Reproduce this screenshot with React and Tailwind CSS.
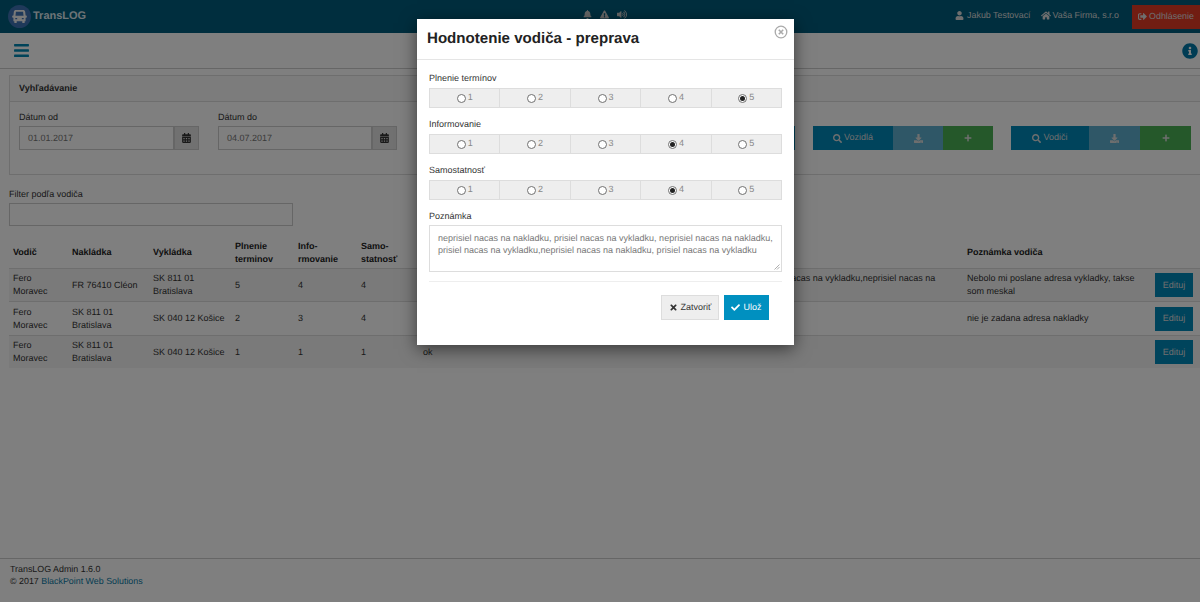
import React from "react";
import {
  FaBell, FaExclamationTriangle, FaVolumeUp, FaUser, FaHome, FaSignOutAlt, FaBars, FaInfoCircle,
  FaCalendarAlt, FaSearch, FaDownload, FaPlus, FaTimes, FaCheck,
} from "react-icons/fa";

const FONT = "font-['Liberation_Sans',Arial,sans-serif]";

function Radio({ n, checked }) {
  return (
    <div className="flex-1 flex items-center justify-center gap-[2px] bg-[#eeeeee] border border-[#dddddd] -ml-px first:ml-0 text-[#888888] text-[9px]">
      <span className="w-[9px] h-[9px] rounded-full border border-[#707070] bg-white flex items-center justify-center">
        {checked && <span className="w-[5px] h-[5px] rounded-full bg-[#222222]" />}
      </span>
      <span>{n}</span>
    </div>
  );
}

function RadioGroup({ label, value, labelClass }) {
  return (
    <div className={labelClass}>
      <div className="text-[9px] leading-[12px] text-[#333333] mb-[4px]">{label}</div>
      <div className="flex h-[20px]">
        {[1, 2, 3, 4, 5].map((n) => (
          <Radio key={n} n={n} checked={n === value} />
        ))}
      </div>
    </div>
  );
}

function DateField({ label, value, widthClass }) {
  return (
    <div>
      <div className="text-[9px] leading-[12px] text-[#333333] mb-[3px]">{label}</div>
      <div className="flex h-[24px]">
        <div className={`${widthClass} border border-[#cccccc] bg-white px-[8px] pt-[1px] flex items-center text-[9px] text-[#777777]`}>{value}</div>
        <div className="w-[25px] bg-[#e2e2e2] border border-[#cccccc] flex items-center justify-center text-[#333333]">
          <FaCalendarAlt className="w-[9px] h-[10px]" />
        </div>
      </div>
    </div>
  );
}

function ActionGroup({ label, w1, w2, w3 }) {
  return (
    <div className="flex h-[24px] text-[9px] text-[#dddddd]">
      <div className={`${w1} bg-[#0088b8] flex items-center justify-center gap-[2px]`}>
        <FaSearch className="w-[9px] h-[9px]" />
        <span>{label}</span>
      </div>
      <div className={`${w2} bg-[#5eafcf] flex items-center justify-center`}>
        <FaDownload className="w-[9px] h-[9px]" />
      </div>
      <div className={`${w3} bg-[#4bb154] flex items-center justify-center`}>
        <FaPlus className="w-[8px] h-[8px]" />
      </div>
    </div>
  );
}

const LONG1 = "neprisiel nacas na nakladku, prisiel nacas na vykladku, neprisiel nacas na nakladku, prisiel nacas na vykladku,neprisiel nacas na nakladku, prisiel nacas na vykladku";

const rows = [
  { v: "Fero Moravec", n: "FR 76410 Cléon", y: "SK 811 01 Bratislava", a: 5, b: 4, c: 4, p: LONG1, d: "Nebolo mi poslane adresa vykladky, takse som meskal", cls: "h-[33px] bg-[#f5f5f5]" },
  { v: "Fero Moravec", n: "SK 811 01 Bratislava", y: "SK 040 12 Košice", a: 2, b: 3, c: 4, p: "", d: "nie je zadana adresa nakladky", cls: "h-[34px] bg-white" },
  { v: "Fero Moravec", n: "SK 811 01 Bratislava", y: "SK 040 12 Košice", a: 1, b: 1, c: 1, p: "ok", d: "", cls: "h-[33px] bg-[#f5f5f5]" },
];

export default function App() {
  return (
    <div className={`relative h-[602px] w-[1200px] overflow-hidden bg-white ${FONT} [text-rendering:geometricPrecision] text-[#333333]`}>
      <header className="h-[33px] bg-[#005c7c] flex items-center text-white">
        <div className="ml-[8px] w-[23px] h-[23px] rounded-full bg-[#3f72b4] flex items-center justify-center">
          <svg viewBox="0 0 16 16" className="w-[15px] h-[15px]" fill="#f2f2f2">
            <path fillRule="evenodd" d="M4 1h8c1 0 1.8.7 2 1.700L14.500 7H15a.8.8 0 0 1 .8.8v.7a.8.8 0 0 1-.8.8h-.500V13h-1v2h-2.500v-2H5v2H2.500v-2h-1V9.300H1a.8.800 0 0 1-.8-.8v-.7A.8.800 0 0 1 1 7h.5L2 2.700C2.200 1.700 3 1 4 1zM4.200 3l-.5 4.200h8.600L11.800 3H4.200zM3.500 9.500v1.500h2V9.500h-2zm7 0v1.500h2V9.500h-2z" />
          </svg>
        </div>
        <span className="ml-[2px] text-[11px] font-bold text-[#dce8ee]">TransLOG</span>
        <div className="ml-[497px] mb-[5px] flex items-center gap-[8px] text-[#cfcfcf]">
          <FaBell className="w-[9px] h-[9px]" />
          <FaExclamationTriangle className="w-[9px] h-[9px]" />
          <FaVolumeUp className="w-[10px] h-[9px]" />
        </div>
        <div className="ml-auto flex items-center text-[8.900px] text-[#dddddd] h-full">
          <FaUser className="w-[9px] h-[9px] mb-[2px]" />
          <span className="ml-[3px] mb-[2px]">Jakub Testovací</span>
          <FaHome className="w-[10px] h-[9px] ml-[10px] mb-[2px]" />
          <span className="ml-[2px] mb-[2px]">Vaša Firma, s.r.o</span>
          <div className="ml-[13px] h-[24px] w-[68px] bg-[#e23a25] flex items-center justify-center gap-[2px]">
            <FaSignOutAlt className="w-[9px] h-[9px]" />
            <span>Odhlásenie</span>
          </div>
        </div>
      </header>

      <div className="h-[36px] border-b border-[#cccccc] bg-white flex items-center justify-between pl-[14px] pr-[2px] text-[#0086b3]">
        <FaBars className="w-[15px] h-[17px]" />
        <FaInfoCircle className="w-[16px] h-[16px] text-[#0078a8]" />
      </div>

      <main className="pl-[9px] pt-[6px]">
        <section className="border border-r-0 border-[#dddddd] h-[100px] bg-white">
          <div className="h-[26px] border-b border-[#dddddd] bg-[#f8f8f8] flex items-center px-[9px] text-[9px] font-bold text-[#333333]">Vyhľadávanie</div>
          <div className="flex pl-[9px] pt-[9px] items-end">
            <DateField label="Dátum od" value="01.01.2017" widthClass="w-[155px]" />
            <div className="w-[19px]" />
            <DateField label="Dátum do" value="04.07.2017" widthClass="w-[154px]" />
            <div className="ml-auto flex gap-[18px] pr-[9px]">
              <div className="w-[180px] h-[24px] bg-[#0088b8]" />
              <ActionGroup label="Vozidlá" w1="w-[80px]" w2="w-[50px]" w3="w-[50px]" />
              <ActionGroup label="Vodiči" w1="w-[78px]" w2="w-[51px]" w3="w-[51px]" />
            </div>
          </div>
        </section>

        <div className="mt-[13px] text-[9px] leading-[12px]">Filter podľa vodiča</div>
        <div className="mt-[3px] w-[284px] h-[23px] border border-[#cccccc] bg-white" />

        <table className="mt-[12px] w-[1191px] table-fixed border-collapse text-[9px] leading-[13px]">
          <colgroup>
            <col className="w-[59px]" />
            <col className="w-[81px]" />
            <col className="w-[82px]" />
            <col className="w-[63px]" />
            <col className="w-[63px]" />
            <col className="w-[62px]" />
            <col className="w-[544px]" />
            <col className="w-[184px]" />
            <col />
          </colgroup>
          <thead>
            <tr className="h-[30px] text-[9px] text-[#222222] text-left align-middle">
              <th className="px-[4px] font-bold">Vodič</th>
              <th className="px-[4px] font-bold">Nakládka</th>
              <th className="px-[4px] font-bold">Vykládka</th>
              <th className="px-[4px] font-bold">Plnenie<br />terminov</th>
              <th className="px-[4px] font-bold">Info-<br />rmovanie</th>
              <th className="px-[4px] font-bold">Samo-<br />statnosť</th>
              <th className="px-[4px] font-bold" />
              <th className="px-[4px] font-bold">Poznámka vodiča</th>
              <th />
            </tr>
          </thead>
          <tbody>
            {rows.map((r, i) => (
              <tr key={i} className={`border-t border-[#dddddd] align-middle [&>td]:pt-[1px] ${r.cls}`}>
                <td className="px-[4px]">{r.v}</td>
                <td className="px-[4px]">{r.n}</td>
                <td className="px-[4px]">{r.y}</td>
                <td className="px-[4px]">{r.a}</td>
                <td className="px-[4px]">{r.b}</td>
                <td className="px-[4px]">{r.c}</td>
                <td className="px-[4px] pr-[20px]">{r.p}</td>
                <td className="px-[4px]">{r.d}</td>
                <td className="px-0 text-right pr-[7px]">
                  <span className="inline-flex align-middle items-center justify-center w-[38px] h-[24px] bg-[#0088b8] text-[#dddddd] text-[9px]">Edituj</span>
                </td>
              </tr>
            ))}
          </tbody>
        </table>
      </main>

      <footer className="absolute left-0 right-0 bottom-0 h-[44px] border-t border-[#cccccc] px-[10px] pt-[4px] text-[8.900px] leading-[12px] bg-white">
        <div>TransLOG Admin 1.6.0</div>
        <div>© 2017 <span className="text-[#0a7aa5]">BlackPoint Web Solutions</span></div>
      </footer>

      <div className="absolute inset-0 bg-black/50" />

      <div className="absolute left-[417px] top-[19px] w-[377px] h-[326px] bg-white shadow-[0_4px_16px_rgba(0,0,0,0.55)]">
        <div className="h-[41px] border-b border-[#e5e5e5] pl-[10px] flex items-center relative">
          <h2 className="text-[15.100px] font-bold text-[#222222]">Hodnotenie vodiča - preprava</h2>
          <svg viewBox="0 0 14 14" className="absolute right-[6px] top-[6px] w-[14px] h-[14px]" fill="none" stroke="#aaaaaa">
            <circle cx="7" cy="7" r="5.8" strokeWidth="1.3" />
            <path d="M4.800 4.800 9.200 9.200M9.200 4.800 4.800 9.200" strokeWidth="1.6" />
          </svg>
        </div>
        <div className="px-[12px] pt-[12px]">
          <RadioGroup label="Plnenie termínov" value={5} />
          <RadioGroup label="Informovanie" value={4} labelClass="mt-[10px]" />
          <RadioGroup label="Samostatnosť" value={4} labelClass="mt-[10px]" />
          <div className="mt-[10px] text-[9px] leading-[12px] text-[#333333] mb-[3px]">Poznámka</div>
          <div className="relative h-[47px] border border-[#dddddd] pl-[8px] pr-[6px] pt-[6px] text-[9px] leading-[12px] text-[#777777]">
            neprisiel nacas na nakladku, prisiel nacas na vykladku, neprisiel nacas na nakladku, prisiel nacas na vykladku,neprisiel nacas na nakladku, prisiel nacas na vykladku
            <svg viewBox="0 0 6 6" className="absolute right-[1px] bottom-[1px] w-[6px] h-[6px]" stroke="#999999" strokeWidth="0.8">
              <path d="M0.500 5.500 5.500 0.500M3 5.500 5.500 3" />
            </svg>
          </div>
          <div className="mt-[9px] border-t border-[#eeeeee]" />
          <div className="mt-[13px] flex justify-end gap-[5px] pr-[13px] text-[9px]">
            <div className="w-[58px] h-[25px] bg-[#eeeeee] border border-[#dddddd] flex items-center justify-center gap-[3px] text-[#333333]">
              <FaTimes className="w-[9px] h-[9px]" />
              <span>Zatvoriť</span>
            </div>
            <div className="w-[45px] h-[25px] bg-[#0090c0] flex items-center justify-center gap-[3px] text-white">
              <FaCheck className="w-[9px] h-[9px]" />
              <span>Ulož</span>
            </div>
          </div>
        </div>
      </div>
    </div>
  );
}
